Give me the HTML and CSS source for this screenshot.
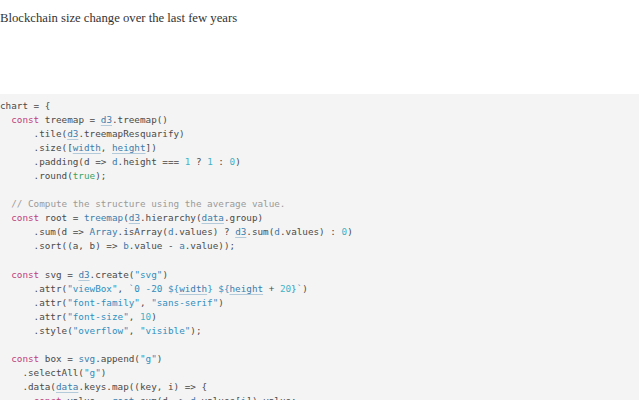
FILE: index.html
```html
<!DOCTYPE html>
<html lang="en">
<head>
<meta charset="utf-8">
<title>Blockchain size change</title>
<link rel="stylesheet" href="styles.css">
</head>
<body>
<div class="notebook">
  <p class="title">Blockchain size change over the last few years</p>
  <div class="output-space"></div>
  <pre class="code">chart = {
  <span class="k">const</span> treemap = <span class="r">d3</span>.treemap()
      .tile(<span class="r">d3</span>.treemapResquarify)
      .size([<span class="r">width</span>, <span class="r">height</span>])
      .padding(d =&gt; <span class="v">d</span>.height === <span class="n">1</span> ? <span class="n">1</span> : <span class="n">0</span>)
      .round(<span class="a">true</span>);

  <span class="c">// Compute the structure using the average value.</span>
  <span class="k">const</span> root = <span class="v">treemap</span>(<span class="r">d3</span>.hierarchy(<span class="r">data</span>.group)
      .sum(d =&gt; <span class="v">Array</span>.isArray(<span class="v">d</span>.values) ? <span class="r">d3</span>.sum(<span class="v">d</span>.values) : <span class="n">0</span>)
      .sort((a, b) =&gt; <span class="v">b</span>.value - <span class="v">a</span>.value));

  <span class="k">const</span> svg = <span class="r">d3</span>.create(<span class="s">"svg"</span>)
      .attr(<span class="s">"viewBox"</span>, <span class="s">`0 -20 ${</span><span class="r">width</span><span class="s">} ${</span><span class="r">height</span> + <span class="n">20</span><span class="s">}`</span>)
      .attr(<span class="s">"font-family"</span>, <span class="s">"sans-serif"</span>)
      .attr(<span class="s">"font-size"</span>, <span class="n">10</span>)
      .style(<span class="s">"overflow"</span>, <span class="s">"visible"</span>);

  <span class="k">const</span> box = <span class="v">svg</span>.append(<span class="s">"g"</span>)
    .selectAll(<span class="s">"g"</span>)
    .data(<span class="r">data</span>.keys.map((key, i) =&gt; {
      <span class="k">const</span> value = <span class="v">root</span>.sum(d =&gt; <span class="v">d</span>.values[<span class="v">i</span>]).value;
      <span class="k">return</span> {key, value, children: <span class="v">root</span>.children};
    }))
    .join(<span class="s">"g"</span>);
}</pre>
</div>
</body>
</html>
```
FILE: styles.css
```css
html, body {
  margin: 0;
  padding: 0;
  background: #ffffff;
  overflow: hidden;
}

.notebook {
  display: flex;
  flex-direction: column;
}

.title {
  margin: 9px 0 0 0;
  font-family: "Liberation Serif", "Times New Roman", serif;
  font-size: 12.7px;
  line-height: 18px;
  color: #333333;
}

.output-space {
  height: 67px;
}

.code {
  margin: 0 1px 0 0;
  padding: 5px 0 0 0;
  background: #f4f4f4;
  font-family: "DejaVu Sans Mono", "Liberation Mono", monospace;
  font-size: 9.3px;
  line-height: 14.05px;
  color: #4a4a4a;
  white-space: pre;
}

.k { color: #c0407c; }
.v { color: #3d7cab; }
.r {
  color: #3d7cab;
  text-decoration: underline;
  text-decoration-color: #b3cadb;
  text-decoration-thickness: 1px;
  text-underline-offset: 2px;
}
.s { color: #2f8fbf; }
.n { color: #45b2c6; }
.a { color: #3aa363; }
.c { color: #9a9a9a; }
```
